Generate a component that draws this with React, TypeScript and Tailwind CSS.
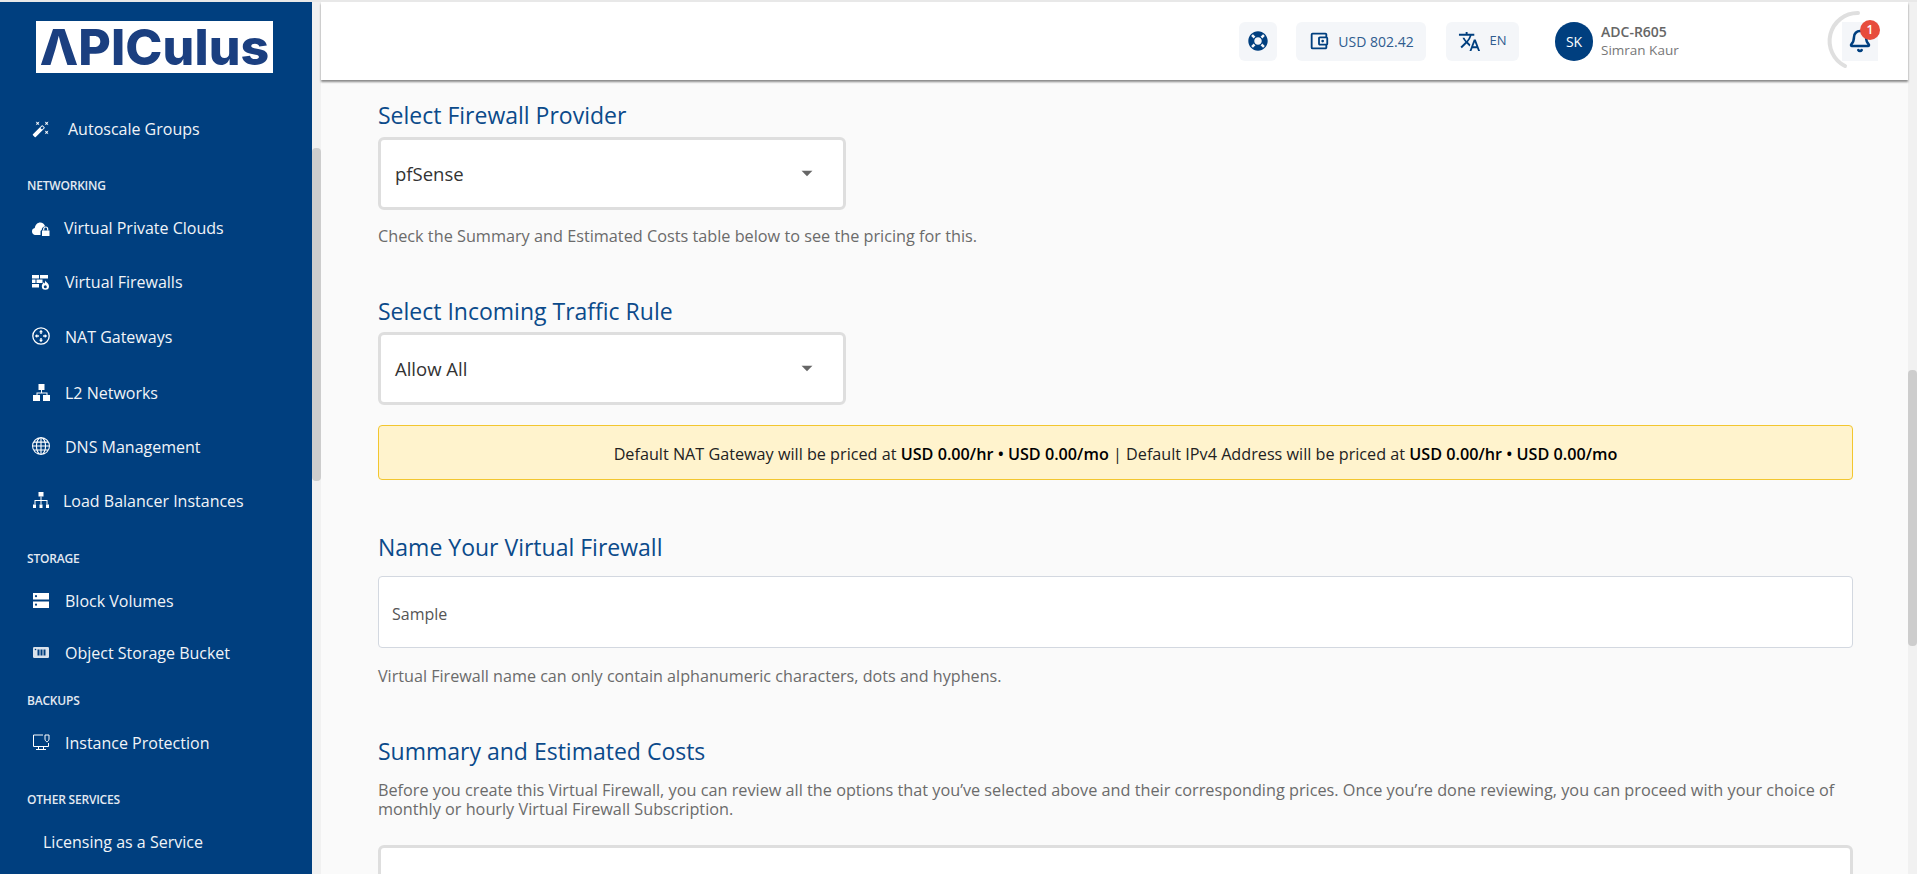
import { Bell } from "lucide-react";
import { BsGlobe } from "react-icons/bs";
import { FaLifeRing } from "react-icons/fa";
import { MdArrowDropDown, MdAutoFixHigh, MdOutlineAccountBalanceWallet, MdTranslate } from "react-icons/md";

const font = "font-['Open_Sans','Noto_Sans',sans-serif]";

function CloudLock() {
  return (
    <svg viewBox="0 0 18 15" className="h-[15px] w-[18px]" fill="white">
      <path d="M0 10.5C0 8.6 1.2 7.4 2.8 7.1 3.3 3.6 5.600 1.500 8.200 1.500c2.300 0 4.200 1.500 4.900 3.700-2 .4-3.300 1.700-3.400 3.700-.9.300-1.200 1-1.200 1.800v3.300H2.800C1.200 13.700 0 12.300 0 10.500z" />
      <path d="M10 9.500h7.500V15H10z" />
      <path d="M11.700 9.500V8a2 2 0 0 1 4 0v1.500" fill="none" stroke="white" strokeWidth="1.200" />
    </svg>
  );
}

function WallFlame() {
  return (
    <svg viewBox="0 0 18 15" className="h-[15px] w-[18px]" fill="white">
      <path d="M0 0h7v3.500H0zM8 0h8v3.500H8zM0 4.500h3.500V8H0zM4.500 4.500h6V8h-6zM0 9h7v3.500H0z" />
      <path d="M13.200 5.200c.4 1.900 3.800 3 3.800 6a3.600 3.600 0 0 1-7.200 0c0-1.800 1.200-2.600 1.800-3.900.5.500.8 1 .9 1.500.5-1 .8-2.200.7-3.600z" />
      <circle cx="13.300" cy="11.700" r="1.500" fill="#003f7f" />
    </svg>
  );
}

function NatIcon() {
  return (
    <svg viewBox="0 0 18 18" className="h-[18px] w-[18px]" fill="white">
      <circle cx="9" cy="9" r="8.200" fill="none" stroke="white" strokeWidth="1.300" />
      <path d="M9 2.800 11 5.200H9.700v1.700H8.300V5.200H7zM9 15.200 7 12.800h1.300v-1.700h1.400v1.700H11zM2.800 9 5.200 7v1.300h1.700v1.400H5.200V11zM15.200 9 12.800 11V9.700h-1.700V8.300h1.700V7z" />
    </svg>
  );
}

function L2Icon() {
  return (
    <svg viewBox="0 0 17 17" className="h-[17px] w-[17px]" fill="white">
      <path d="M5.500 0h6v6h-6zM0 11h7v6H0zM10 11h7v6h-7z" />
      <path d="M8 6h1v2.500h5.500V11h-1V9.500h-9V11h-1V8.500H8z" />
    </svg>
  );
}

function BalancerIcon() {
  return (
    <svg viewBox="0 0 16 16" className="h-[16px] w-[16px]" fill="white">
      <path d="M5.500 0h5v4.500h-5zM0 12.500h3V16H0zM6.500 12.500h3V16h-3zM13 12.500h3V16h-3z" />
      <path d="M7.500 4.500h1v3.500h6v4.500h-1V9h-5v3.500h-1V9h-5v3.500h-1V8h6z" />
    </svg>
  );
}

function BlockIcon() {
  return (
    <svg viewBox="0 0 16 15" className="h-[15px] w-[16px]">
      <path d="M0 0h16v6.500H0zM0 8.500h16V15H0z" fill="white" />
      <circle cx="3" cy="3.200" r="1.100" fill="#003f7f" />
      <circle cx="3" cy="11.700" r="1.100" fill="#003f7f" />
    </svg>
  );
}

function ObjectStore() {
  return (
    <svg viewBox="0 0 16 11" className="h-[11px] w-[16px]">
      <rect width="16" height="11" rx="1.200" fill="#d9e2ec" />
      <path d="M4.500 2.500h2v6h-2zM7.500 2.500h2v6h-2zM10.500 2.500h2v6h-2z" fill="#003f7f" />
      <circle cx="2.500" cy="2.500" r=".8" fill="#003f7f" />
    </svg>
  );
}

function MonitorShield() {
  return (
    <svg viewBox="0 0 18 17" className="h-[17px] w-[18px]" fill="none" stroke="white" strokeWidth="1">
      <path d="M11 1H1.500v11.500h15V9" />
      <path d="M6.500 12.500v2.500M11.500 12.500v2.500M4 15.500h10" />
      <path d="M13 1h4v4c0 1.300-.8 2.200-2 3-1.200-.8-2-1.700-2-3z" />
    </svg>
  );
}

const groups = [
  { kind: "item", label: "Autoscale Groups", box: "h-[54px] mt-[29px]", text: "ml-[18px]", icon: <MdAutoFixHigh size={24} color="white" /> },
  { kind: "head", label: "NETWORKING", box: "mt-[20px]" },
  { kind: "item", label: "Virtual Private Clouds", box: "h-[54px] mt-[5px]", text: "ml-[14px]", icon: <CloudLock /> },
  { kind: "item", label: "Virtual Firewalls", box: "h-[54px]", text: "ml-[15px]", icon: <WallFlame /> },
  { kind: "item", label: "NAT Gateways", box: "h-[54px]", text: "ml-[15px] mt-[1px]", icon: <NatIcon /> },
  { kind: "item", label: "L2 Networks", box: "h-[54px] mt-[2px]", text: "ml-[15px] mt-[1px]", icon: <L2Icon /> },
  { kind: "item", label: "DNS Management", box: "h-[54px]", text: "ml-[15px] mt-[1px]", icon: <BsGlobe size={18} color="white" /> },
  { kind: "item", label: "Load Balancer Instances", box: "h-[54px]", text: "ml-[13px] mt-[1px]", icon: <BalancerIcon /> },
  { kind: "head", label: "STORAGE", box: "mt-[22px]" },
  { kind: "item", label: "Block Volumes", box: "h-[50px] mt-[6px]", text: "ml-[15px] mt-[1px]", icon: <BlockIcon /> },
  { kind: "item", label: "Object Storage Bucket", box: "h-[54px]", text: "ml-[15px] mt-[1px]", icon: <ObjectStore /> },
  { kind: "head", label: "BACKUPS", box: "mt-[12px]" },
  { kind: "item", label: "Instance Protection", box: "h-[54px] mt-[4px]", text: "ml-[15px] mt-[1px]", icon: <MonitorShield /> },
  { kind: "head", label: "OTHER SERVICES", box: "mt-[21px]" },
  { kind: "item", label: "Licensing as a Service", box: "h-[54px] mt-[4px]", text: "ml-[-7px] mt-[1px]" },
];

function Sidebar() {
  return (
    <aside className="flex w-[312px] shrink-0 flex-col overflow-hidden bg-[#003f7f] text-white">
      <div className="ml-[36px] mt-[19px] flex h-[52px] w-[237px] items-center justify-center bg-white">
        <span className="font-['Inter',sans-serif] text-[50px] font-extrabold leading-none tracking-[0.1px] text-[#1b3f80]">ΛPICulus</span>
      </div>
      {groups.map((g) =>
        g.kind === "head" ? (
          <div key={g.label} className={`${g.box} flex h-[20px] items-center pl-[27px] text-[12px] font-semibold tracking-[-0.2px] text-[#e3e9f1]`}>
            {g.label}
          </div>
        ) : (
          <div key={g.label} className={`${g.box} flex items-center pl-[32px]`}>
            <span className="flex w-[18px] shrink-0 items-center justify-center">{g.icon}</span>
            <span className={`${g.text} whitespace-nowrap text-[16px] text-[#f1f4f8]`}>{g.label}</span>
          </div>
        ),
      )}
    </aside>
  );
}

function Scrollbar({ top, height }: { top: string; height: string }) {
  return (
    <div className="w-[9px] shrink-0 bg-[#f1f1f1]">
      <div className={`${top} ${height} rounded-[4px] bg-[#cdcdcd]`} />
    </div>
  );
}

function Header() {
  return (
    <header className="relative z-10 flex h-[78px] shrink-0 items-center bg-white pl-[918px] shadow-[0_2px_2px_rgba(0,0,0,0.45)]">
      <button className="flex h-[39px] w-[38px] items-center justify-center rounded-[6px] bg-[#f4f6f9] text-[#003f7f]">
        <FaLifeRing size={20} />
      </button>
      <div className="ml-[19px] flex h-[39px] w-[130px] items-center justify-center gap-[8px] rounded-[6px] bg-[#f4f6f9] text-[14px] text-[#2f5c8f]">
        <MdOutlineAccountBalanceWallet size={22} className="text-[#003f7f]" />
        USD 802.42
      </div>
      <div className="ml-[20px] flex h-[39px] w-[73px] items-center justify-center gap-[8px] rounded-[6px] bg-[#f4f6f9] text-[13px] text-[#2f5c8f]">
        <MdTranslate size={23} className="text-[#003f7f]" />
        EN
      </div>
      <div className="ml-[36px] flex h-[39px] w-[38px] items-center justify-center rounded-full bg-[#003f7f] text-[14px] text-white">SK</div>
      <div className="ml-[8px] flex w-[120px] flex-col leading-[18px]">
        <span className="text-[14px] font-semibold text-[#666]">ADC-R605</span>
        <span className="text-[13.500px] text-[#777]">Simran Kaur</span>
      </div>
      <div className="relative ml-[121px] flex h-[39px] w-[36px] items-center justify-center bg-[#f4f6f9] text-[#003f7f]">
        <Bell size={24} strokeWidth={2.500} />
        <span className="absolute right-[-2px] top-[-2px] flex h-[20px] w-[20px] items-center justify-center rounded-full bg-[#e74c3c] text-[12px] font-semibold text-white">1</span>
        <svg className="absolute left-[-16px] top-[-11px] overflow-visible" width="40" height="60" viewBox="0 0 40 60" fill="none">
          <path d="M32 2A28 28 0 0 0 19 55" stroke="#dfdfdf" strokeWidth="4" strokeLinecap="round" />
        </svg>
      </div>
    </header>
  );
}

function SelectBox({ value }: { value: string }) {
  return (
    <div className="flex h-[73px] w-[468px] items-center justify-between rounded-[6px] border-[3px] border-[#dedede] bg-white pl-[14px] pr-[23px] text-[18.500px] text-[#333]">
      <span>{value}</span>
      <MdArrowDropDown size={26} className="mb-[2px] text-[#666]" />
    </div>
  );
}

function Title({ children, className }: { children: string; className: string }) {
  return <h2 className={`${className} text-[23px] leading-[30px] text-[#0b4a8a]`}>{children}</h2>;
}

function Content() {
  return (
    <div className="flex-1 overflow-hidden bg-[#fafafa] pl-[57px] pr-[55px]">
      <Title className="mt-[20px]">Select Firewall Provider</Title>
      <div className="mt-[7px]">
        <SelectBox value="pfSense" />
      </div>
      <p className="mt-[16px] text-[16.250px] leading-[20px] text-[#6b6b6b]">Check the Summary and Estimated Costs table below to see the pricing for this.</p>
      <Title className="mt-[50px]">Select Incoming Traffic Rule</Title>
      <div className="mt-[6px]">
        <SelectBox value="Allow All" />
      </div>
      <div className="mt-[20px] flex h-[55px] items-center justify-center rounded-[4px] border border-[#f2c62f] bg-[#fff3cd] pt-[3px] text-[16.200px] text-[#222]">
        <span>
          Default NAT Gateway will be priced at <b className="font-semibold text-black">USD 0.00/hr • USD 0.00/mo</b> | Default IPv4 Address will be priced at <b className="font-semibold text-black">USD 0.00/hr • USD 0.00/mo</b>
        </span>
      </div>
      <Title className="mt-[52px]">Name Your Virtual Firewall</Title>
      <div className="mt-[14px] flex h-[72px] items-center rounded-[4px] border border-[#d3d8e0] bg-white pl-[13px] pt-[3px] text-[16px] text-[#555]">Sample</div>
      <p className="mt-[18px] text-[16.150px] leading-[20px] text-[#6b6b6b]">Virtual Firewall name can only contain alphanumeric characters, dots and hyphens.</p>
      <Title className="mt-[50px]">Summary and Estimated Costs</Title>
      <p className="mt-[15px] text-[16.250px] leading-[19px] text-[#6b6b6b]">
        Before you create this Virtual Firewall, you can review all the options that you’ve selected above and their corresponding prices. Once you’re done reviewing, you can proceed with your choice of monthly or hourly Virtual Firewall Subscription.
      </p>
      <div className="mt-[26px] h-[60px] rounded-[6px] border-[3px] border-[#dedede] bg-white" />
    </div>
  );
}

export default function App() {
  return (
    <div className={`${font} flex h-screen overflow-hidden bg-[#e8e8e8] pt-[2px]`}>
      <Sidebar />
      <Scrollbar top="mt-[146px]" height="h-[333px]" />
      <div className="flex min-w-0 flex-1 flex-col">
        <Header />
        <Content />
      </div>
      <Scrollbar top="mt-[368px]" height="h-[276px]" />
    </div>
  );
}
